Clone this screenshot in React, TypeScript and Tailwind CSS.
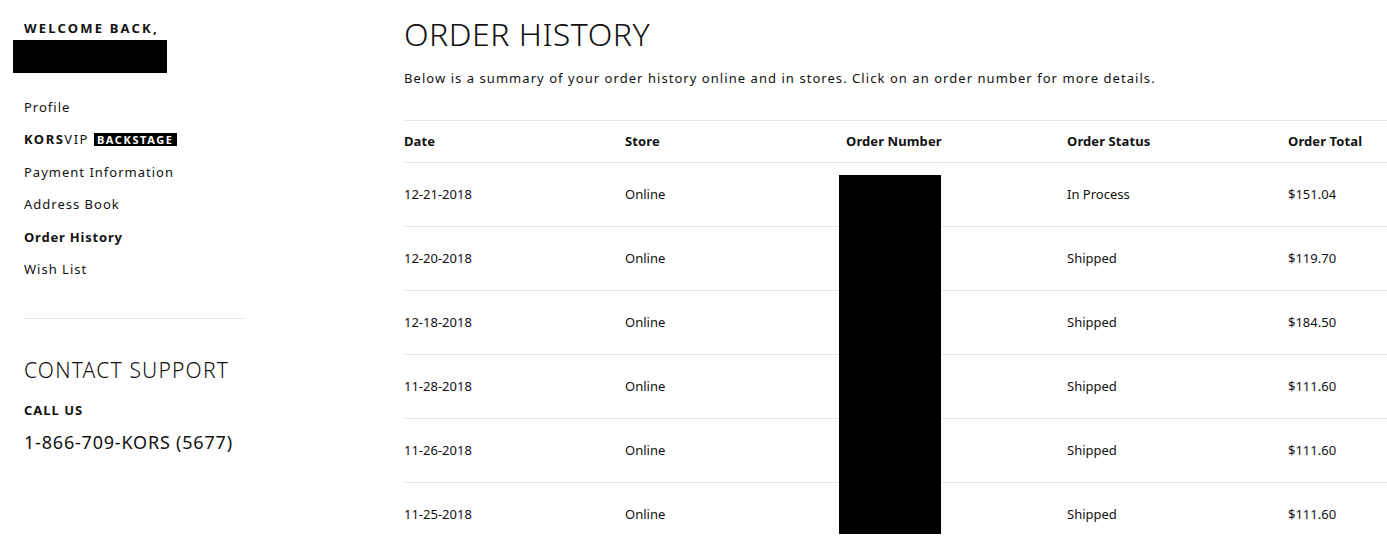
const orders = [
  { date: '12-21-2018', store: 'Online', status: 'In Process', total: '$151.04' },
  { date: '12-20-2018', store: 'Online', status: 'Shipped', total: '$119.70' },
  { date: '12-18-2018', store: 'Online', status: 'Shipped', total: '$184.50' },
  { date: '11-28-2018', store: 'Online', status: 'Shipped', total: '$111.60' },
  { date: '11-26-2018', store: 'Online', status: 'Shipped', total: '$111.60' },
  { date: '11-25-2018', store: 'Online', status: 'Shipped', total: '$111.60' },
];

const navItems = ['Profile', 'KORSVIP', 'Payment Information', 'Address Book', 'Order History', 'Wish List'];

function Sidebar() {
  return (
    <aside className="w-[404px] shrink-0 pl-6 pt-5">
      <p className="text-[13px] leading-4 font-bold tracking-[2.2px]">WELCOME BACK,</p>
      <div className="-ml-[11px] mt-1 h-[33px] w-[154px] bg-black" />

      <nav className="mt-[18px] flex flex-col">
        {navItems.map((item) =>
          item === 'KORSVIP' ? (
            <div key={item} className="flex h-[32.5px] items-center text-[13px] tracking-[1.5px]">
              <span className="font-bold">KORS</span>
              <span>VIP</span>
              <span className="ml-[5px] bg-black px-[3px] text-[11px] leading-[13px] font-bold tracking-[1.6px] text-white">
                BACKSTAGE
              </span>
            </div>
          ) : (
            <a
              key={item}
              className={`flex h-[32.5px] items-center text-[13px] ${
                item === 'Order History' ? 'font-bold tracking-[0.8px]' : 'tracking-[1px]'
              }`}
            >
              {item}
            </a>
          )
        )}
      </nav>

      <div className="mt-8 h-px w-[220px] bg-[#e6e6e6]" />

      <h2 className="mt-[37px] text-[21px] leading-7 font-light tracking-[1.2px]">CONTACT SUPPORT</h2>
      <p className="mt-[17px] text-[13px] leading-[18px] font-bold tracking-[1px]">CALL US</p>
      <p className="mt-[11px] text-[18px] leading-6 tracking-[0.8px]">1-866-709-KORS (5677)</p>
    </aside>
  );
}

export default function App() {
  return (
    <div className="flex h-[546px] w-full overflow-hidden bg-white text-[#111] font-['Noto_Sans',sans-serif]">
      <Sidebar />

      <main className="shrink-0 pt-[14px]">
        <h1 className="text-[32px] leading-10 font-light tracking-[0.5px]">ORDER HISTORY</h1>
        <p className="mt-[14px] text-[13px] leading-5 tracking-[1.05px]">
          Below is a summary of your order history online and in stores. Click on an order number for more details.
        </p>

        <div className="relative mt-8 w-[1105px] border-t border-[#e6e6e6]">
          <div className="grid h-[42px] grid-cols-[repeat(5,221px)] items-center border-b border-[#e6e6e6] text-[13px] font-bold tracking-[0.1px]">
            <span>Date</span>
            <span>Store</span>
            <span>Order Number</span>
            <span>Order Status</span>
            <span>Order Total</span>
          </div>
          {orders.map((o) => (
            <div
              key={o.date}
              className="grid h-16 grid-cols-[repeat(5,221px)] items-center border-b border-[#e6e6e6] text-[13px]"
            >
              <span>{o.date}</span>
              <span>{o.store}</span>
              <span />
              <span>{o.status}</span>
              <span>{o.total}</span>
            </div>
          ))}
          <div className="absolute left-[435px] top-[54px] h-[359px] w-[102px] bg-black" />
        </div>
      </main>
    </div>
  );
}
